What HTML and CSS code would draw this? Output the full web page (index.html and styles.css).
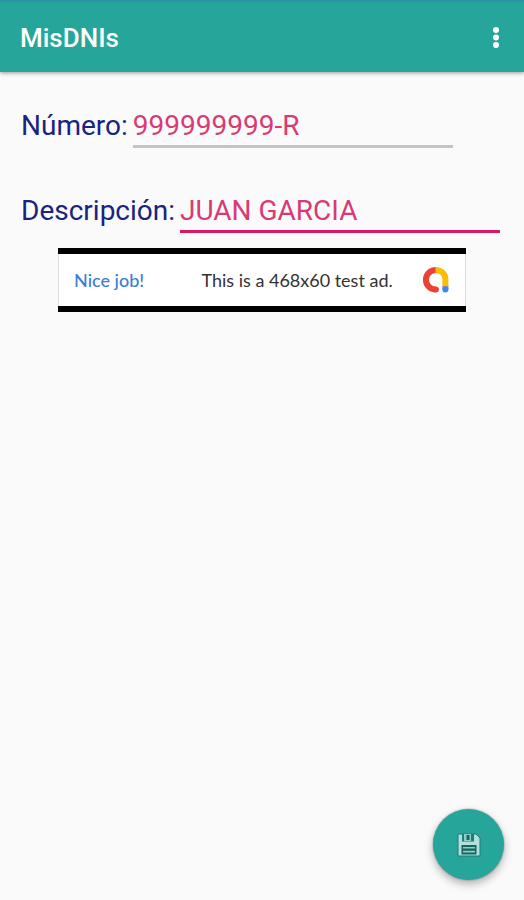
FILE: index.html
```
<!DOCTYPE html>
<html lang="es">
<head>
    <meta charset="UTF-8">
    <meta name="viewport" content="width=device-width, initial-scale=1.0">
    <title>MisDNIs</title>
    <link rel="stylesheet" href="styles.css">
</head>
<body>
    <header class="toolbar">
        <h1 class="title">MisDNIs</h1>
        <button class="menu-button" type="button" aria-label="Menú">
            <svg width="8" height="24" viewBox="0 0 8 24" fill="#fff">
                <circle cx="4" cy="4" r="3"/>
                <circle cx="4" cy="11.5" r="3"/>
                <circle cx="4" cy="19" r="3"/>
            </svg>
        </button>
    </header>

    <main class="content">
        <form class="form" id="dni-form">
            <div class="field">
                <label for="numero">Número:</label>
                <input type="text" id="numero" value="999999999-R">
            </div>
            <div class="field active">
                <label for="descripcion">Descripción:</label>
                <input type="text" id="descripcion" value="JUAN GARCIA">
            </div>
        </form>

        <div class="ad">
            <a class="ad-link" href="#">Nice job!</a>
            <span class="ad-text">This is a 468x60 test ad.</span>
            <svg class="ad-logo" width="28" height="28" viewBox="0 0 28 28" fill="none" stroke-width="6">
                <path d="M23.4 21V13.6A9.7 9.7 0 0 0 13.7 3.9" stroke="#fbbc04"/>
                <path d="M13.7 3.9A9.8 9.8 0 0 0 13.7 23.5" stroke="#ea4335"/>
                <circle cx="13.9" cy="23.5" r="3" fill="#ea4335"/>
                <circle cx="23.4" cy="23.4" r="3" fill="#4285f4"/>
                <path d="M20.4 20.4H26.4V23.4H20.4Z" fill="#4285f4"/>
            </svg>
        </div>
    </main>

    <button class="save-button" type="submit" form="dni-form" aria-label="Guardar">
        <svg width="24" height="24" viewBox="0 0 24 24">
            <path d="M1 1H19L23 5V23H1Z" fill="#b2dfdb" stroke="#1d7d74"/>
            <path d="M5 1H17V8.5H5Z" fill="#1d7d74"/>
            <path d="M7 1H14V8H7Z" fill="#8fcfc8"/>
            <path d="M9.5 2H12.5V7H9.5Z" fill="#14665e"/>
            <path d="M4.5 12H19.5V21.5H4.5Z" fill="#14665e"/>
            <path d="M6 14.8H18M6 18.6H18" stroke="#8fcfc8" stroke-width="1.6"/>
        </svg>
    </button>
</body>
</html>
```

FILE: styles.css
```
* {
    box-sizing: border-box;
}
body {
    margin: 0;
    min-height: 100vh;
    background-color: #fafafa;
    font-family: Roboto, sans-serif;
}
.toolbar {
    display: flex;
    justify-content: space-between;
    align-items: center;
    height: 72px;
    padding: 2px 20px 0;
    background-color: #26a69a;
    border-top: 2px solid #2e8fa8;
    box-shadow: 0 1px 4px rgba(0, 0, 0, 0.4);
}
.title {
    margin: 0;
    color: #fff;
    font-size: 26px;
    font-weight: 500;
}
.menu-button {
    display: flex;
    padding: 4px;
    border: 0;
    background: none;
    cursor: pointer;
}
.content {
    padding: 32px 21px 0;
}
.form {
    display: flex;
    flex-direction: column;
    gap: 41px;
}
.field {
    display: flex;
    align-items: flex-start;
    gap: 5px;
    font-size: 28px;
    line-height: 44px;
}
.field label {
    color: #1a237e;
}
.field input {
    flex: 0 1 320px;
    min-width: 0;
    height: 44px;
    padding: 2px 0 0;
    border: 0;
    border-bottom: 3px solid #c4c4c4;
    border-radius: 0;
    background: none;
    color: #d83a74;
    font: inherit;
    line-height: 39px;
    outline: none;
}
.field.active input {
    border-bottom-color: #d81b60;
}
.ad {
    display: flex;
    align-items: center;
    justify-content: space-between;
    max-width: 408px;
    margin: 15px auto 0;
    padding: 12px 16px;
    border: solid #000;
    border-width: 6px 0;
    background-color: #fff;
    box-shadow: inset 1px 0 #ddd, inset -1px 0 #ddd;
    font-family: Lato, sans-serif;
    font-size: 18px;
}
.ad-link {
    color: #3b7dd8;
    font-weight: 500;
    text-decoration: none;
}
.ad-text {
    margin-left: 28px;
    color: #333;
}
.save-button {
    position: fixed;
    right: 20px;
    bottom: 20px;
    display: flex;
    align-items: center;
    justify-content: center;
    width: 71px;
    height: 71px;
    padding: 0;
    border: 0;
    border-radius: 50%;
    background-color: #26a69a;
    box-shadow: 0 4px 8px rgba(0, 0, 0, 0.3), 0 0 2px rgba(0, 0, 0, 0.4);
    cursor: pointer;
}
```
